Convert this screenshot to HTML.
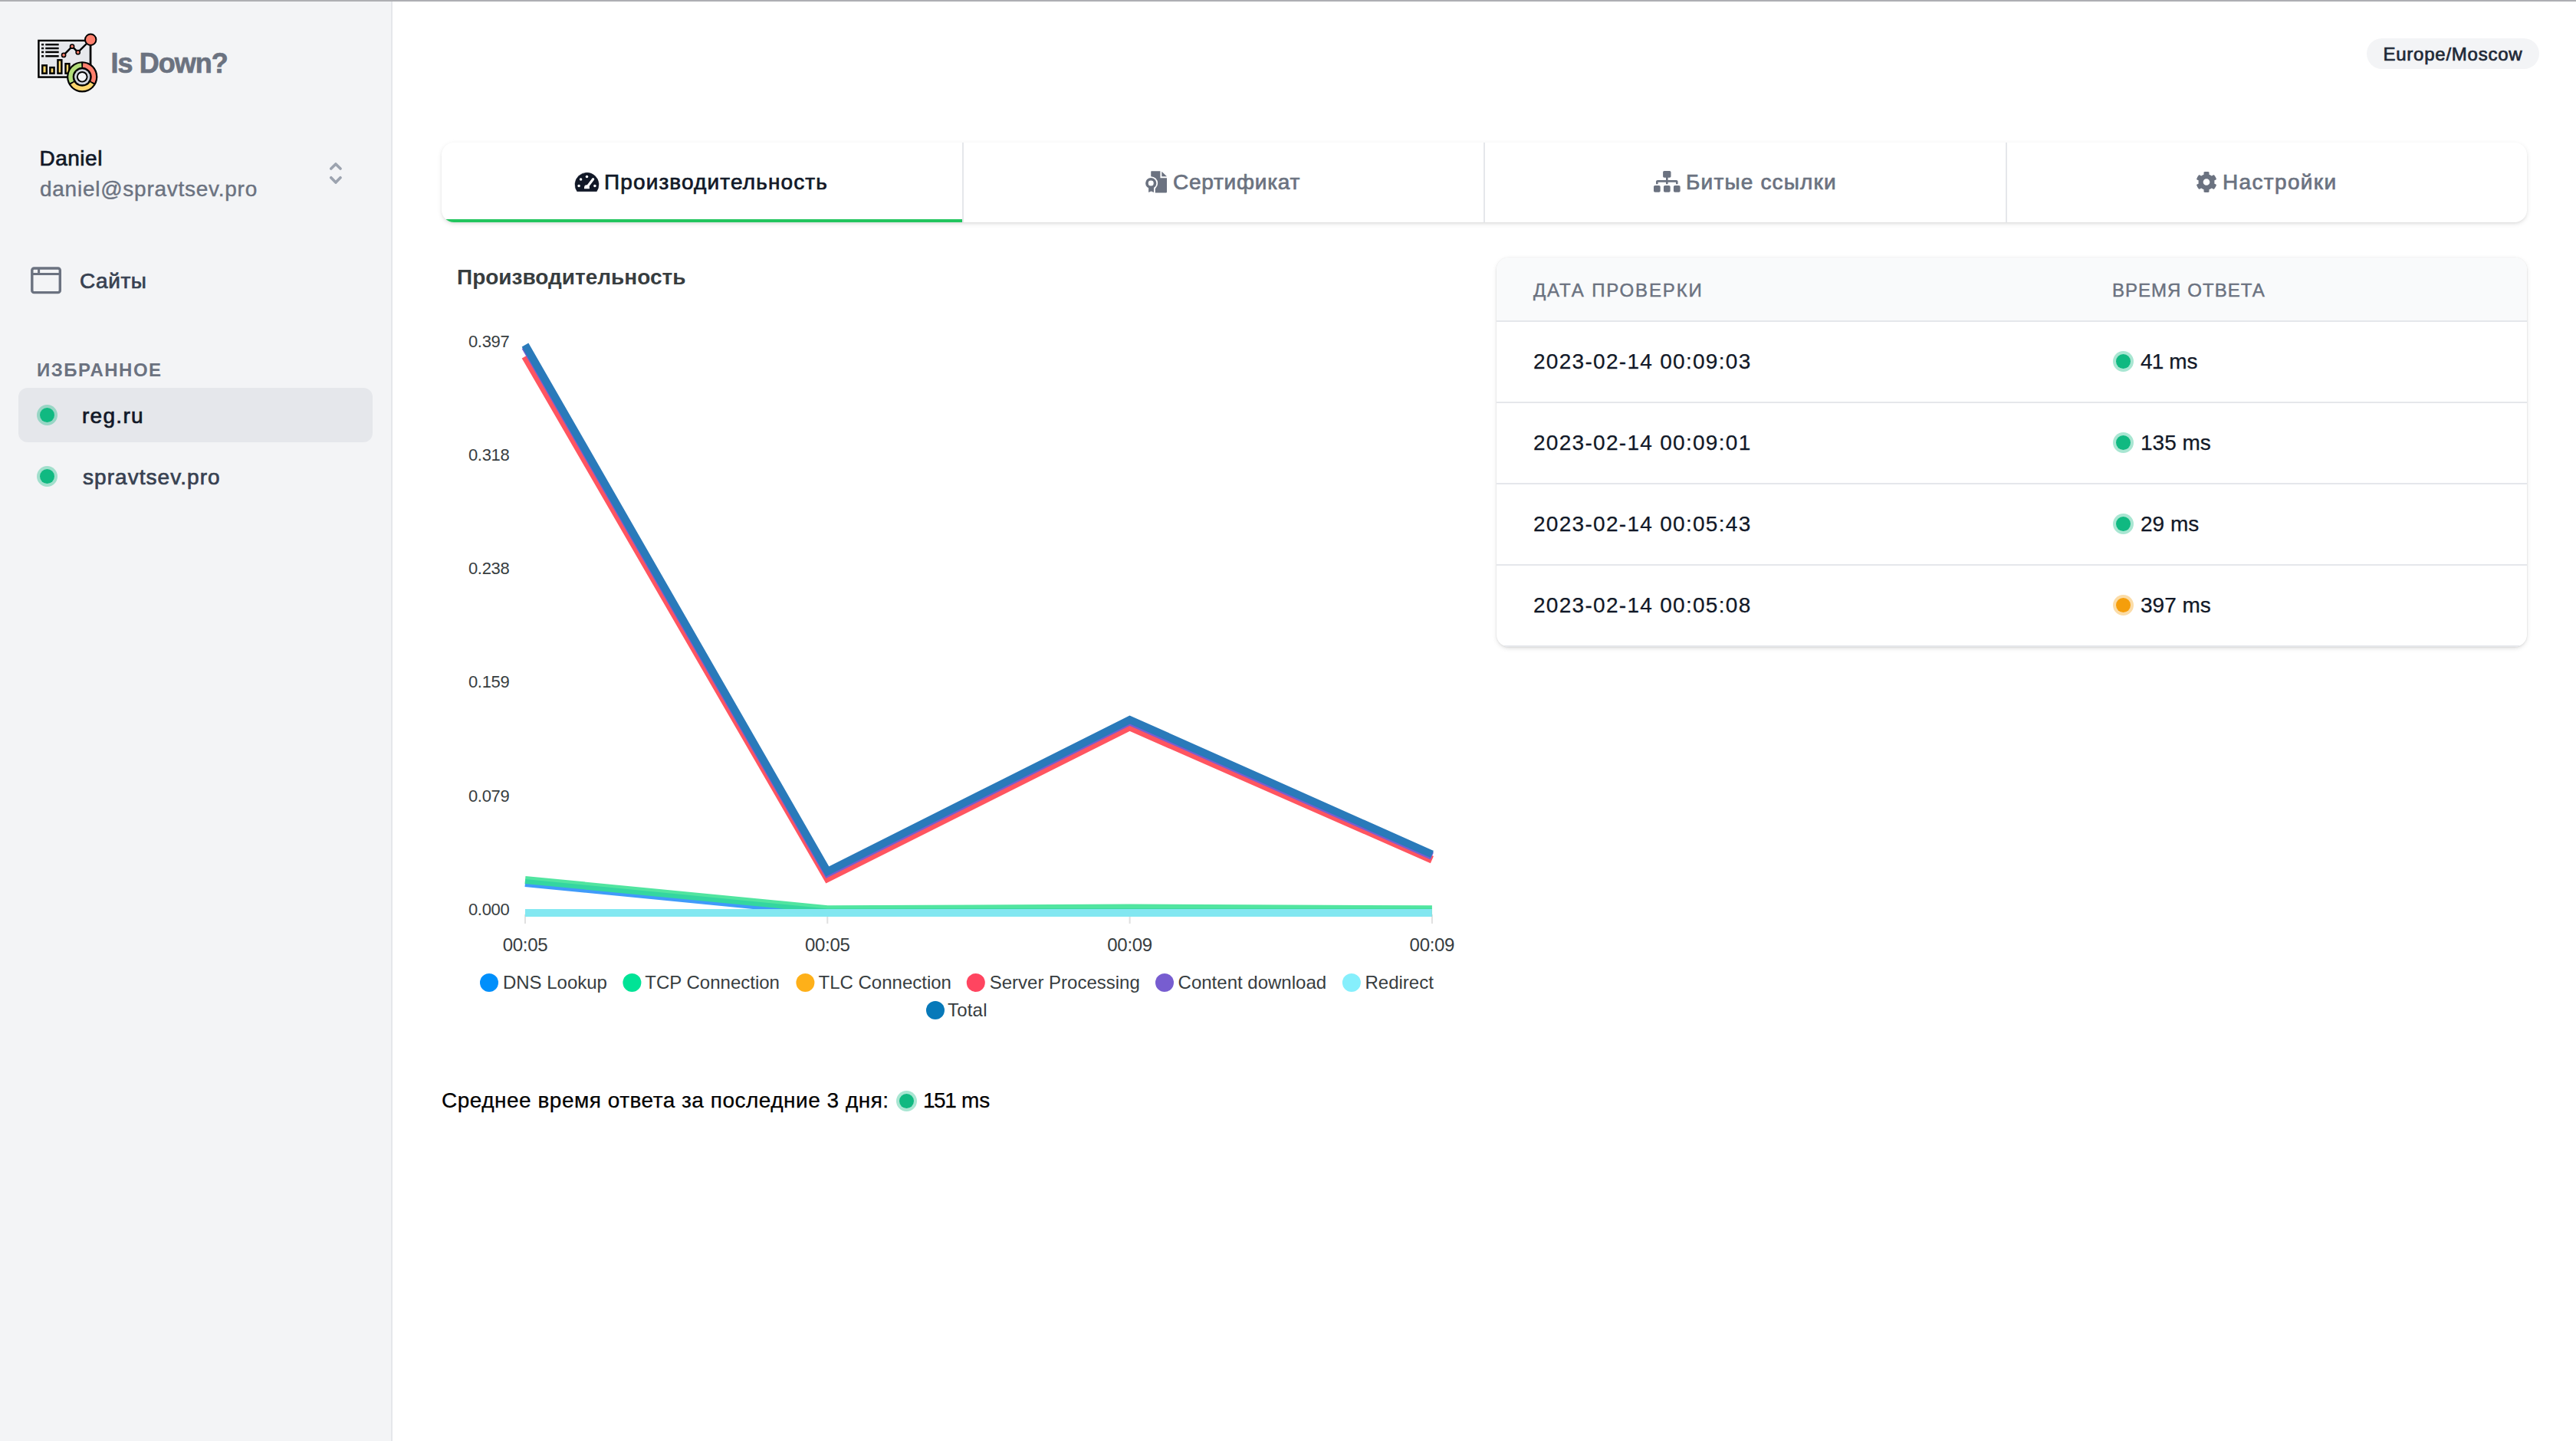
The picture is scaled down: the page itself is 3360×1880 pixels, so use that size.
<!DOCTYPE html>
<html><head><meta charset="utf-8">
<style>
html,body{margin:0;padding:0;}
@media (max-width:1800px){html{zoom:0.5;}}
body{width:3360px;height:1880px;overflow:hidden;position:relative;background:#fff;font-family:"Liberation Sans",sans-serif;}
.a{position:absolute;}
.t{position:absolute;white-space:nowrap;line-height:1;}
.dot{position:absolute;border-radius:50%;width:27px;height:27px;}
.dg{background:rgba(16,185,129,.36);}
.dg::after{content:"";position:absolute;left:4px;top:4px;width:19px;height:19px;border-radius:50%;background:#10b981;}
.dy{background:rgba(245,158,11,.36);}
.dy::after{content:"";position:absolute;left:4px;top:4px;width:19px;height:19px;border-radius:50%;background:#f59e0b;}
</style></head><body>
<div class="a" style="left:0;top:0;width:510px;height:1880px;background:#f3f4f6;border-right:2px solid #e5e7eb"></div>
<div class="a" style="left:0;top:0;width:3360px;height:2px;background:#aeafb3;z-index:10"></div>
<svg class="a" style="left:44px;top:38px" width="88" height="88" viewBox="0 0 1441 1441">
<rect x="105" y="245" width="1107" height="780" fill="#f3f4f6" stroke="#000" stroke-width="40"/>
<rect x="155" y="290" width="1030" height="700" fill="#e7e8ec"/>
<rect x="165" y="310" width="50" height="40" fill="#000"/>
<rect x="250" y="310" width="285" height="40" fill="#000"/>
<rect x="165" y="390" width="50" height="40" fill="#000"/>
<rect x="250" y="390" width="285" height="40" fill="#000"/>
<rect x="165" y="470" width="50" height="40" fill="#000"/>
<rect x="250" y="470" width="285" height="40" fill="#000"/>
<rect x="165" y="557" width="50" height="40" fill="#000"/>
<rect x="250" y="557" width="285" height="40" fill="#000"/>
<rect x="185" y="775" width="90" height="170" fill="#fdd86e" stroke="#000" stroke-width="40"/>
<rect x="350" y="820" width="85" height="125" fill="#fdd86e" stroke="#000" stroke-width="40"/>
<rect x="515" y="660" width="80" height="285" fill="#fdd86e" stroke="#000" stroke-width="40"/>
<rect x="680" y="740" width="80" height="205" fill="#fdd86e" stroke="#000" stroke-width="40"/>
<polyline points="640,555 820,370 945,495 1215,225" fill="none" stroke="#000" stroke-width="40" stroke-linejoin="round"/>
<circle cx="640" cy="555" r="42" fill="#ff806e" stroke="#000" stroke-width="26"/>
<circle cx="820" cy="370" r="42" fill="#ff806e" stroke="#000" stroke-width="26"/>
<circle cx="945" cy="495" r="42" fill="#ff806e" stroke="#000" stroke-width="26"/>
<line x1="1212" y1="300" x2="1212" y2="800" stroke="#000" stroke-width="40"/>
<circle cx="1215" cy="225" r="118" fill="#ff806e" stroke="#000" stroke-width="32"/>
<circle cx="1035" cy="1020" r="330" fill="#000"/>
<path d="M1053.0 725.6 A295 295 0 0 1 1299.0 1151.6 L1218.5 1111.5 A205 205 0 0 0 1047.5 815.4Z" fill="#ff806e"/>
<path d="M1281.0 1182.8 A295 295 0 0 1 789.0 1182.8 L864.1 1133.1 A205 205 0 0 0 1205.9 1133.1Z" fill="#fcd66e"/>
<path d="M771.0 1151.6 A295 295 0 0 1 1017.0 725.6 L1022.5 815.4 A205 205 0 0 0 851.5 1111.5Z" fill="#b2dd7a"/>
<circle cx="1035" cy="1020" r="165" fill="#d1d5de"/>
<circle cx="1035" cy="1020" r="120" fill="#000"/>
<circle cx="1035" cy="1020" r="88" fill="#f3f4f6"/>
</svg>
<div class="t" style="left:144.5px;top:64.5px;font-size:36px;color:#6b7280;letter-spacing:-0.95px;font-weight:bold;-webkit-text-stroke:0.7px currentColor;">Is Down?</div>
<div class="t" style="left:51.5px;top:192.8px;font-size:28px;color:#111827;letter-spacing:0.5px;-webkit-text-stroke:0.7px currentColor;">Daniel</div>
<div class="t" style="left:52px;top:232.5px;font-size:28px;color:#6b7280;letter-spacing:0.74px;-webkit-text-stroke:0.4px currentColor;">daniel@spravtsev.pro</div>
<svg class="a" style="left:426px;top:212px" width="24" height="32" viewBox="0 0 24 32"><path d="M5.8 8.1 L11.9 2 L18 8.1 M5.8 19.7 L11.9 26.1 L18 19.7" fill="none" stroke="#9ca3af" stroke-width="3.6" stroke-linecap="round" stroke-linejoin="round"/></svg>
<svg class="a" style="left:34px;top:340px" width="54" height="52" viewBox="34 340 54 52"><rect x="41.8" y="350" width="36.5" height="31.6" rx="2.6" fill="none" stroke="#6b7280" stroke-width="3.4"/><line x1="41.8" y1="357.5" x2="78.3" y2="357.5" stroke="#6b7280" stroke-width="2.9"/><line x1="50.6" y1="350" x2="50.6" y2="357.5" stroke="#6b7280" stroke-width="3"/></svg>
<div class="t" style="left:104px;top:352.9px;font-size:28px;color:#374151;letter-spacing:0.55px;-webkit-text-stroke:0.7px currentColor;">Сайты</div>
<div class="t" style="left:48px;top:470.7px;font-size:24px;color:#6b7280;letter-spacing:1.5px;font-weight:bold;">ИЗБРАННОЕ</div>
<div class="a" style="left:24px;top:506px;width:462px;height:71px;border-radius:12px;background:#e5e7eb"></div>
<div class="dot dg" style="left:48px;top:527.8px"></div>
<div class="t" style="left:107px;top:528.7px;font-size:28px;color:#111827;letter-spacing:1.3px;-webkit-text-stroke:0.7px currentColor;">reg.ru</div>
<div class="dot dg" style="left:48px;top:608px"></div>
<div class="t" style="left:108px;top:609px;font-size:28px;color:#374151;letter-spacing:1.05px;-webkit-text-stroke:0.7px currentColor;">spravtsev.pro</div>
<div class="a" style="left:3087px;top:50px;width:225px;height:40px;border-radius:20px;background:#f3f4f6"></div>
<div class="t" style="left:3108.5px;top:58.7px;font-size:24px;color:#1f2937;letter-spacing:0.75px;-webkit-text-stroke:0.7px currentColor;">Europe/Moscow</div>
<div class="a" style="left:576px;top:186px;width:2720px;height:104px;border-radius:16px;background:#fff;box-shadow:0 2px 6px 0 rgba(0,0,0,.1),0 2px 4px -2px rgba(0,0,0,.1);overflow:hidden">
<div class="a" style="left:679px;top:0;width:2px;height:104px;background:#e5e7eb"></div>
<div class="a" style="left:1359px;top:0;width:2px;height:104px;background:#e5e7eb"></div>
<div class="a" style="left:2040px;top:0;width:2px;height:104px;background:#e5e7eb"></div>
<div class="a" style="left:0;top:100px;width:679px;height:4px;background:#22c55e"></div>
</div>
<svg class="a" style="left:740px;top:215px" width="50" height="45" viewBox="740 215 50 45"><path d="M752.8 249.7 A15.5 15.5 0 1 1 778.2 249.7 Z" fill="#111827" stroke="#111827" stroke-width="0.6" stroke-linejoin="round"/><g fill="#fff"><circle cx="765.5" cy="230.6" r="1.75"/><circle cx="757.6" cy="234" r="1.75"/><circle cx="755.1" cy="242.6" r="1.75"/><circle cx="775.9" cy="242.6" r="1.75"/><path d="M762 246.3 V244.6 A3.45 3.3 0 0 1 768.9 244.6 V246.3 Z"/></g><line x1="765.6" y1="244.2" x2="773.6" y2="233.8" stroke="#fff" stroke-width="3.2" stroke-linecap="round"/></svg>
<svg class="a" style="left:1485px;top:215px" width="50" height="45" viewBox="0 0 1601 1441"><path fill="#6b7280" d="M540 265H910V550H1185V1140Q1185 1165 1160 1165H690V700H520V285Q520 265 540 265Z"/><path fill="#6b7280" d="M970 280L1185 490H970Z"/><circle cx="520" cy="770" r="285" fill="#fff"/><rect x="640" y="950" width="50" height="230" fill="#fff"/><path fill="#6b7280" d="M420 900H640V1150L530 1105L420 1150Z"/><circle cx="520" cy="770" r="228" fill="#6b7280"/><circle cx="520" cy="770" r="112" fill="#fff"/></svg>
<svg class="a" style="left:2157.2px;top:223.4px" width="34.6" height="27.7" viewBox="0 0 640 512"><path fill="#6b7280" d="M128 352H32c-17.67 0-32 14.33-32 32v96c0 17.67 14.33 32 32 32h96c17.67 0 32-14.33 32-32v-96c0-17.67-14.33-32-32-32zm-24-80h192v48h48v-48h192v48h48v-57.59c0-21.17-17.23-38.41-38.41-38.41H344v-64h40c17.67 0 32-14.33 32-32V32c0-17.67-14.33-32-32-32H256c-17.67 0-32 14.33-32 32v96c0 17.67 14.33 32 32 32h40v64H94.41C73.23 224 56 241.23 56 262.41V320h48v-48zm264 80h-96c-17.67 0-32 14.33-32 32v96c0 17.67 14.33 32 32 32h96c17.67 0 32-14.33 32-32v-96c0-17.67-14.33-32-32-32zm240 0h-96c-17.67 0-32 14.33-32 32v96c0 17.67 14.33 32 32 32h96c17.67 0 32-14.33 32-32v-96c0-17.67-14.33-32-32-32z"/></svg>
<svg class="a" style="left:2865px;top:224px" width="26" height="27" viewBox="17 8 478 496"><path fill="#6b7280" d="M487.4 315.7l-42.6-24.6c4.3-23.2 4.3-47 0-70.2l42.6-24.6c4.9-2.8 7.1-8.6 5.5-14-11.1-35.6-30-67.8-54.7-94.6-3.8-4.1-10-5.1-14.8-2.3L380.8 110c-17.9-15.4-38.5-27.3-60.8-35.1V25.8c0-5.6-3.9-10.5-9.4-11.7-36.7-8.2-74.3-7.8-109.2 0-5.5 1.2-9.4 6.1-9.4 11.7V75c-22.2 7.9-42.8 19.8-60.8 35.1L88.7 85.5c-4.9-2.8-11-1.9-14.8 2.3-24.7 26.7-43.6 58.9-54.7 94.6-1.7 5.4.6 11.2 5.5 14L67.3 221c-4.3 23.2-4.3 47 0 70.2l-42.6 24.6c-4.9 2.8-7.1 8.6-5.5 14 11.1 35.6 30 67.8 54.7 94.6 3.8 4.1 10 5.1 14.8 2.3l42.6-24.6c17.9 15.4 38.5 27.3 60.8 35.1v49.2c0 5.6 3.9 10.5 9.4 11.7 36.7 8.2 74.3 7.8 109.2 0 5.5-1.2 9.4-6.1 9.4-11.7v-49.2c22.2-7.9 42.8-19.8 60.8-35.1l42.6 24.6c4.9 2.8 11 1.9 14.8-2.3 24.7-26.7 43.6-58.9 54.7-94.6 1.5-5.5-.7-11.3-5.6-14.1zM256 336c-44.1 0-80-35.9-80-80s35.9-80 80-80 80 35.9 80 80-35.9 80-80 80z"/></svg>
<div class="t" style="left:788px;top:224.3px;font-size:28px;color:#111827;letter-spacing:1.12px;-webkit-text-stroke:0.7px currentColor;">Производительность</div>
<div class="t" style="left:1530px;top:224.3px;font-size:28px;color:#6b7280;letter-spacing:0.75px;-webkit-text-stroke:0.7px currentColor;">Сертификат</div>
<div class="t" style="left:2199px;top:224.3px;font-size:28px;color:#6b7280;letter-spacing:1.18px;-webkit-text-stroke:0.7px currentColor;">Битые ссылки</div>
<div class="t" style="left:2899px;top:224.3px;font-size:28px;color:#6b7280;letter-spacing:1.35px;-webkit-text-stroke:0.7px currentColor;">Настройки</div>
<svg class="a" style="left:576px;top:320px" width="1344" height="1050" viewBox="576 320 1344 1050">
<text x="596" y="371" font-family="Liberation Sans" font-size="28" font-weight="bold" fill="#373d3f" letter-spacing="0">Производительность</text>
<text x="664.5" y="452.5" text-anchor="end" font-family="Liberation Sans" font-size="22" fill="#373d3f" letter-spacing="-0.3">0.397</text>
<text x="664.5" y="600.8" text-anchor="end" font-family="Liberation Sans" font-size="22" fill="#373d3f" letter-spacing="-0.3">0.318</text>
<text x="664.5" y="749.0" text-anchor="end" font-family="Liberation Sans" font-size="22" fill="#373d3f" letter-spacing="-0.3">0.238</text>
<text x="664.5" y="897.2" text-anchor="end" font-family="Liberation Sans" font-size="22" fill="#373d3f" letter-spacing="-0.3">0.159</text>
<text x="664.5" y="1045.5" text-anchor="end" font-family="Liberation Sans" font-size="22" fill="#373d3f" letter-spacing="-0.3">0.079</text>
<text x="664.5" y="1193.8" text-anchor="end" font-family="Liberation Sans" font-size="22" fill="#373d3f" letter-spacing="-0.3">0.000</text>
<line x1="685" y1="1193" x2="685" y2="1205" stroke="#e0e0e0" stroke-width="2"/>
<text x="685" y="1241.4" text-anchor="middle" font-family="Liberation Sans" font-size="24" fill="#373d3f" letter-spacing="-0.3">00:05</text>
<line x1="1079.3" y1="1193" x2="1079.3" y2="1205" stroke="#e0e0e0" stroke-width="2"/>
<text x="1079.3" y="1241.4" text-anchor="middle" font-family="Liberation Sans" font-size="24" fill="#373d3f" letter-spacing="-0.3">00:05</text>
<line x1="1473.6" y1="1193" x2="1473.6" y2="1205" stroke="#e0e0e0" stroke-width="2"/>
<text x="1473.6" y="1241.4" text-anchor="middle" font-family="Liberation Sans" font-size="24" fill="#373d3f" letter-spacing="-0.3">00:09</text>
<line x1="1867.9" y1="1193" x2="1867.9" y2="1205" stroke="#e0e0e0" stroke-width="2"/>
<text x="1867.9" y="1241.4" text-anchor="middle" font-family="Liberation Sans" font-size="24" fill="#373d3f" letter-spacing="-0.3">00:09</text>
<polyline points="685,1152.0 1079.3,1190.4 1473.6,1190.3 1867.9,1190.4" fill="none" stroke="#1E89F9" stroke-opacity="0.85" stroke-width="10" stroke-linejoin="miter" stroke-linecap="butt"/>
<polyline points="685,1147.9 1079.3,1186.3 1473.6,1184.5 1867.9,1186.3" fill="none" stroke="#33E18F" stroke-opacity="0.85" stroke-width="10" stroke-linejoin="miter" stroke-linecap="butt"/>
<polyline points="685,1191.0 1079.3,1191.0 1473.6,1191.0 1867.9,1191.0" fill="none" stroke="#FEB019" stroke-opacity="0.85" stroke-width="10" stroke-linejoin="miter" stroke-linecap="butt"/>
<polyline points="685,464.9 1079.3,1145.8 1473.6,948.4 1867.9,1121.6" fill="none" stroke="#FF5560" stroke-opacity="1" stroke-width="10" stroke-linejoin="miter" stroke-linecap="butt"/>
<polyline points="685,452.6 1079.3,1139.3 1473.6,941.4 1867.9,1116.9" fill="none" stroke="#775DD0" stroke-opacity="1" stroke-width="10" stroke-linejoin="miter" stroke-linecap="butt"/>
<polyline points="685,1191.0 1079.3,1191.0 1473.6,1191.0 1867.9,1191.0" fill="none" stroke="#7CEAFB" stroke-opacity="0.95" stroke-width="10" stroke-linejoin="miter" stroke-linecap="butt"/>
<polyline points="685,450.0 1079.3,1136.9 1473.6,939.0 1867.9,1114.5" fill="none" stroke="#2A7ABA" stroke-opacity="1" stroke-width="10" stroke-linejoin="miter" stroke-linecap="butt"/>
<circle cx="638.0" cy="1282" r="12" fill="#008FFB"/>
<text x="655.9" y="1289.7" font-family="Liberation Sans" font-size="24" fill="#373d3f" letter-spacing="0">DNS Lookup</text>
<circle cx="824.4" cy="1282" r="12" fill="#00E396"/>
<text x="841.3" y="1289.7" font-family="Liberation Sans" font-size="24" fill="#373d3f" letter-spacing="0">TCP Connection</text>
<circle cx="1050.4" cy="1282" r="12" fill="#FEB019"/>
<text x="1067.5" y="1289.7" font-family="Liberation Sans" font-size="24" fill="#373d3f" letter-spacing="0">TLC Connection</text>
<circle cx="1272.8" cy="1282" r="12" fill="#FF4560"/>
<text x="1290.7" y="1289.7" font-family="Liberation Sans" font-size="24" fill="#373d3f" letter-spacing="0">Server Processing</text>
<circle cx="1519.0" cy="1282" r="12" fill="#775DD0"/>
<text x="1536.6" y="1289.7" font-family="Liberation Sans" font-size="24" fill="#373d3f" letter-spacing="0">Content download</text>
<circle cx="1762.9" cy="1282" r="12" fill="#86EFFC"/>
<text x="1780.5" y="1289.7" font-family="Liberation Sans" font-size="24" fill="#373d3f" letter-spacing="0">Redirect</text>
<circle cx="1220" cy="1318" r="12" fill="#0779B9"/>
<text x="1236" y="1325.6" font-family="Liberation Sans" font-size="24" fill="#373d3f" letter-spacing="0.2">Total</text>
</svg>
<div class="a" style="left:1952px;top:336px;width:1344px;height:508px;border-radius:16px;background:#fff;box-shadow:0 0 0 1px rgba(0,0,0,.025),0 2px 6px 0 rgba(0,0,0,.1),0 2px 4px -2px rgba(0,0,0,.1);overflow:hidden">
<div class="a" style="left:0;top:0;width:1344px;height:82px;background:#f9fafb;border-bottom:2px solid #e5e7eb"></div>
<div class="a" style="left:0;top:188px;width:1344px;height:2px;background:#e5e7eb"></div>
<div class="a" style="left:0;top:294px;width:1344px;height:2px;background:#e5e7eb"></div>
<div class="a" style="left:0;top:400px;width:1344px;height:2px;background:#e5e7eb"></div>
<div class="a" style="left:0;top:506px;width:1344px;height:2px;background:#e5e7eb"></div>
</div>
<div class="t" style="left:2000px;top:366.7px;font-size:24px;color:#6b7280;letter-spacing:1.85px;-webkit-text-stroke:0.45px currentColor;">ДАТА ПРОВЕРКИ</div>
<div class="t" style="left:2754.9px;top:366.7px;font-size:24px;color:#6b7280;letter-spacing:1.05px;-webkit-text-stroke:0.45px currentColor;">ВРЕМЯ ОТВЕТА</div>
<div class="t" style="left:2000px;top:457.8px;font-size:28px;color:#111827;letter-spacing:1.29px;-webkit-text-stroke:0.25px currentColor;">2023-02-14 00:09:03</div>
<div class="dot dg" style="left:2755.5px;top:457.7px"></div>
<div class="t" style="left:2792px;top:457.8px;font-size:28px;color:#111827;letter-spacing:0px;-webkit-text-stroke:0.25px currentColor;"><span style="letter-spacing:-0.85px">41</span> ms</div>
<div class="t" style="left:2000px;top:563.8px;font-size:28px;color:#111827;letter-spacing:1.29px;-webkit-text-stroke:0.25px currentColor;">2023-02-14 00:09:01</div>
<div class="dot dg" style="left:2755.5px;top:563.7px"></div>
<div class="t" style="left:2792px;top:563.8px;font-size:28px;color:#111827;letter-spacing:0px;-webkit-text-stroke:0.25px currentColor;">135 ms</div>
<div class="t" style="left:2000px;top:669.8px;font-size:28px;color:#111827;letter-spacing:1.29px;-webkit-text-stroke:0.25px currentColor;">2023-02-14 00:05:43</div>
<div class="dot dg" style="left:2755.5px;top:669.7px"></div>
<div class="t" style="left:2792px;top:669.8px;font-size:28px;color:#111827;letter-spacing:0px;-webkit-text-stroke:0.25px currentColor;">29 ms</div>
<div class="t" style="left:2000px;top:775.8px;font-size:28px;color:#111827;letter-spacing:1.29px;-webkit-text-stroke:0.25px currentColor;">2023-02-14 00:05:08</div>
<div class="dot dy" style="left:2755.5px;top:775.7px"></div>
<div class="t" style="left:2792px;top:775.8px;font-size:28px;color:#111827;letter-spacing:0px;-webkit-text-stroke:0.25px currentColor;">397 ms</div>
<div class="t" style="left:576px;top:1422.3px;font-size:28px;color:#000;letter-spacing:0.5px;-webkit-text-stroke:0.25px currentColor;">Среднее время ответа за последние 3 дня:</div>
<div class="dot dg" style="left:1168.5px;top:1422.5px"></div>
<div class="t" style="left:1204px;top:1422.3px;font-size:28px;color:#000;letter-spacing:0px;-webkit-text-stroke:0.25px currentColor;"><span style="letter-spacing:-1.5px">151</span> ms</div>
</body></html>
